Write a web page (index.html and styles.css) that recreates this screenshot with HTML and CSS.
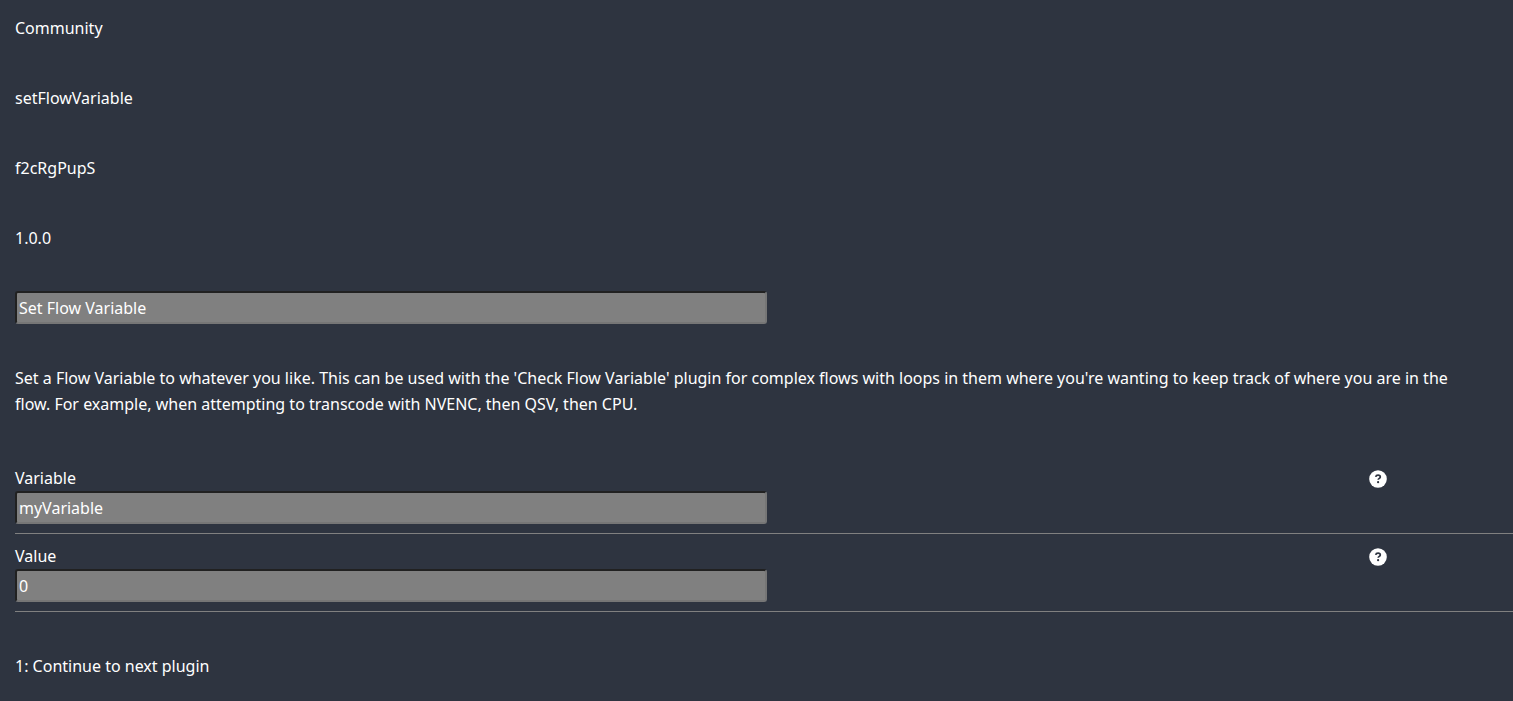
FILE: index.html
```html
<!DOCTYPE html>
<html lang="en">
<head>
<meta charset="utf-8">
<title>Set Flow Variable</title>
<link rel="stylesheet" href="styles.css">
</head>
<body>
<main class="plugin">
  <p class="line">Community</p>
  <p class="line">setFlowVariable</p>
  <p class="line">f2cRgPupS</p>
  <p class="line">1.0.0</p>
  <input class="field title" type="text" value="Set Flow Variable" aria-label="Plugin name">
  <p class="description">Set a Flow Variable to whatever you like. This can be used with the 'Check Flow Variable' plugin for complex flows with loops in them where you're wanting to keep track of where you are in the flow. For example, when attempting to transcode with NVENC, then QSV, then CPU.</p>
  <section class="inputs">
    <div class="row">
      <div class="control">
        <label for="variable">Variable</label>
        <input class="field" id="variable" type="text" value="myVariable">
      </div>
      <button class="help" type="button" aria-label="Help for Variable">
        <svg viewBox="0 0 18 18"><circle cx="9" cy="9" r="8.8" fill="#fff"/><path d="M6.7 6.9C6.9 5.7 7.8 5.2 9.1 5.2c1.4 0 2.2.7 2.2 1.7 0 1.5-2.1 1.4-2.1 2.9" fill="none" stroke="#2e3440" stroke-width="1.7"/><circle cx="9.1" cy="12.2" r="1.1" fill="#2e3440"/></svg>
      </button>
    </div>
    <div class="row">
      <div class="control">
        <label for="value">Value</label>
        <input class="field" id="value" type="text" value="0">
      </div>
      <button class="help" type="button" aria-label="Help for Value">
        <svg viewBox="0 0 18 18"><circle cx="9" cy="9" r="8.8" fill="#fff"/><path d="M6.7 6.9C6.9 5.7 7.8 5.2 9.1 5.2c1.4 0 2.2.7 2.2 1.7 0 1.5-2.1 1.4-2.1 2.9" fill="none" stroke="#2e3440" stroke-width="1.7"/><circle cx="9.1" cy="12.2" r="1.1" fill="#2e3440"/></svg>
      </button>
    </div>
  </section>
  <p class="output">1: Continue to next plugin</p>
</main>
</body>
</html>
```
FILE: styles.css
```css
* { box-sizing: border-box; }
body {
  margin: 0;
  background: #2e3440;
  color: #fff;
  font: 16px/26px "Segoe UI", "Noto Sans", sans-serif;
}
.plugin { padding: 15px 0 22px 15px; }
p { margin: 0; }
.line { margin-bottom: 44px; }
.field {
  display: block;
  width: 752px;
  max-width: 100%;
  height: 33px;
  margin: 0;
  padding: 1px 2px;
  border: 2px inset #767676;
  border-radius: 3px;
  background: #808080;
  color: #fff;
  font: inherit;
}
.title { margin-top: -4px; }
.description { margin: 41px 48px 48px 0; }
.row {
  display: grid;
  grid-template-columns: 1fr 144px;
  padding-bottom: 9px;
  margin-bottom: 9px;
  border-bottom: 1px solid #808080;
}
.control label { display: block; }
.help {
  width: 18px;
  height: 18px;
  margin: 5px 0 0;
  padding: 0;
  border: 0;
  background: none;
}
.help svg { display: block; width: 18px; height: 18px; }
.output { margin-top: 41px; }
```
